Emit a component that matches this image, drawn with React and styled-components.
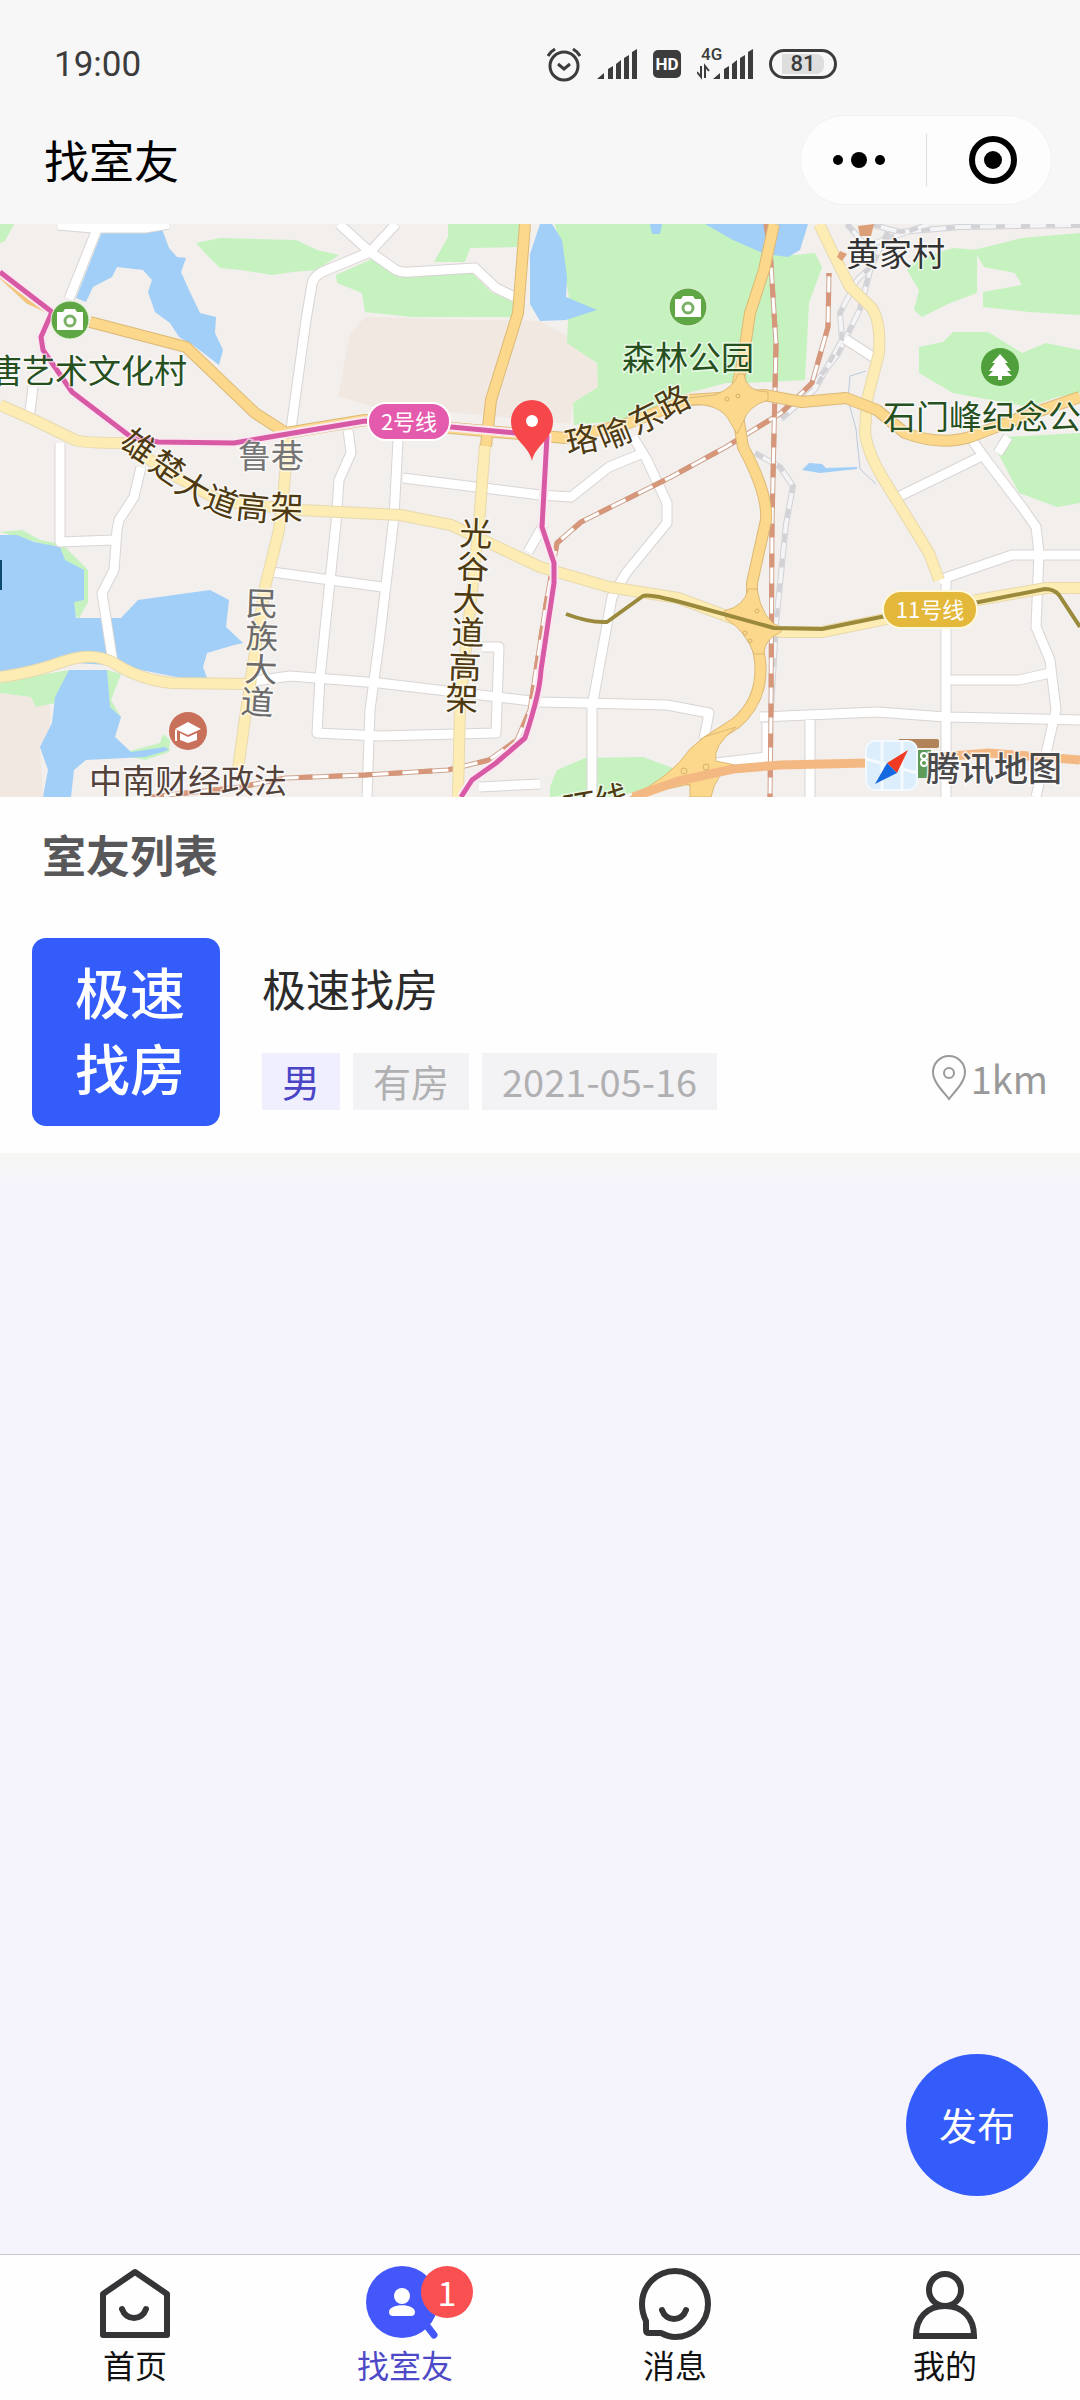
import styled, { createGlobalStyle, css } from 'styled-components'

const GlobalStyle = createGlobalStyle`
  * {
    box-sizing: border-box;
  }

  body {
    margin: 0;
    background: #f5f4fd;
    font-family: 'Noto Sans CJK SC', 'Noto Sans', sans-serif;
  }

  button {
    padding: 0;
    border: none;
    background: none;
    font-family: inherit;
    cursor: pointer;
  }
`

// ---- map data ----

const greens = [
  '0,0 14,0 5,17 0,19',
  '196,19 220,14 296,16 317,26 339,31 317,46 293,48 272,51 241,46 220,44 207,31',
  '336,51 374,34 406,51 472,49 492,69 515,78 513,93 413,93 365,88 362,69 337,59',
  '448,0 520,0 517,23 470,24 465,38 434,38 448,13',
  '555,0 712,0 764,29 795,31 815,29 822,43 809,79 805,156 747,159 726,159 688,169 626,196 574,201 573,179 598,163 597,139 567,119 569,73 561,29',
  '974,26 1022,14 1080,9 1080,91 1029,88 983,83 983,68 1022,61 1015,49 984,43',
  '907,46 915,36 953,24 977,26 977,69 950,79 922,93 914,86 919,66',
  '919,123 943,118 953,108 988,108 1022,129 1046,119 1080,126 1080,169 1057,173 1029,183 953,169 919,149',
  '1005,213 1080,209 1080,279 1057,283 1019,269 998,229',
  '550,563 557,546 585,534 643,533 678,546 664,563 609,573 550,573',
  '0,458 69,446 55,479 36,483 31,473 0,469',
  '0,308 22,306 40,316 62,320 88,346 88,378 78,396 72,380 60,325',
  '107,446 121,450 111,476 121,493 114,495 104,480',
  '118,530 160,519 163,510 170,516 169,528 145,536',
]

const sands = [
  '365,93 480,96 540,97 567,112 597,139 598,163 573,179 570,200 470,190 370,182 338,172 350,110',
  '0,469 31,473 50,482 50,503 40,523 43,573 0,573',
]

const waters = [
  '102,8 162,5 169,24 177,33 186,34 181,48 189,66 200,89 216,93 215,109 223,126 219,141 193,121 179,113 170,99 155,88 148,68 152,56 143,46 117,43 112,53 93,63 86,78 76,74',
  '0,311 17,311 34,318 60,323 65,336 84,346 84,376 74,378 76,394 121,394 138,376 210,366 229,376 226,403 243,419 234,421 207,429 203,443 207,454 186,455 121,442 62,438 0,451',
  '69,446 107,446 110,483 121,493 115,513 131,528 165,523 169,526 145,533 86,536 74,546 71,573 43,573 48,546 40,523 52,499 55,473',
  '705,0 808,0 800,26 788,33 765,30 733,16',
  '540,0 552,0 562,16 567,53 566,73 597,86 566,96 540,97 530,80 530,30',
  '650,0 662,0 660,10 652,10',
  '802,246 809,239 822,240 826,244 857,243 857,245 820,249',
]

const whiteRoads = [
  'M58 1L93 4L145 4L169 0',
  'M97 5L69 75',
  'M339 0L370 28L396 0',
  'M370 28L322 48Q313 53 312 60L306 96L291 205',
  'M370 28L396 46Q402 49 410 48L475 44L496 64L517 74',
  'M33 163L29 195',
  'M60 219L60 318L114 316',
  'M141 243L134 273L119 296L117 306L114 346L102 369L113 439',
  'M348 206L351 229L339 256L336 299L320 453L317 509L380 512L496 509L499 423L482 423',
  'M398 216L394 293L379 419L370 486L367 573',
  'M403 254L540 271L571 273L609 243L643 229',
  'M633 213L647 236L667 279L667 299L626 349L612 373L592 483L592 573',
  'M272 348L382 363',
  'M248 458L290 452L379 459L540 478L667 481L709 489L704 515',
  'M479 563L540 560',
  'M544 300L528 328',
  'M939 356L1012 331L1080 331',
  'M970 213L984 233L1022 283L1036 303L1039 329L1036 403L1050 436L1056 486L1036 573',
  'M898 273L984 231',
  'M998 229L1008 213',
  'M946 350L946 573',
  'M950 456L1019 456L1050 449',
  'M760 493L877 488L946 493L1080 496',
  'M767 499L767 533L716 539',
  'M810 496L810 573',
  'M845 115L873 133',
]

const yellowRoads = [
  'M0 181L34 196L75 216Q83 219 124 219L172 250L220 277L300 286L400 291L451 301L540 343L609 363L678 374L740 397L781 408L822 408L881 396L977 376L1046 364L1080 364',
  'M0 453Q32 449 62 438T114 439Q140 456 172 459L248 460',
  'M289 203L284 263L279 306L265 363L247 480L238 545',
  'M485 220L479 300L460 480L458 573',
  'M819 0L833 29L850 63L871 83Q881 96 879 129L867 176L865 209Q868 230 884 256L905 290L929 329L939 356',
]

const orangeRoads = [
  'M90 98L186 123L255 189L286 209L365 196L451 204L566 214L626 200L688 176L735 173L764 171L802 178L846 174L877 186L905 209Q940 222 970 213L1022 193L1080 173',
  'M525 0L518 89L491 176L486 222',
  'M774 0L764 46L750 89L743 136L735 173L743 223Q768 269 766 296L752 359L752 393L760 436Q764 475 736 499L705 519L685 560',
]

const rails = [
  'M150 573L241 563L286 554L365 551L448 546L489 536L517 516L530 486L546 380L557 319L581 298L671 253L726 223L781 189L812 159L828 103L829 49',
  'M766 0L770 25L776 120L772 300L771 486L770 573',
]

const greyRails = [
  'M871 43L857 56L840 89L842 116L815 165L781 195',
  'M888 8L871 43L860 85L838 130L812 163',
  'M1080 1L960 3L900 8L870 0',
  'M847 0L866 22L930 0',
  'M755 229L780 243L793 262L786 300L776 400L771 486',
]

const line2 = 'M0 48L52 88L41 113L43 126L72 168L131 213L158 218L234 219L365 197L451 203L547 212L542 303L554 339L554 359L541 446Q540 469 525 514L496 539L472 556L461 573'
const line11 = 'M566 390Q590 399 607 398L643 372Q650 369 698 383L774 404L822 405L881 393L979 378L1045 365Q1054 365 1059 371L1080 403'

const labelSize = 33

// every glyph is [character, centre x, centre y, angle]
const streets = [
  { color: '#4e3a12', glyphs: [['雄', 139, 221, 35], ['楚', 168, 243, 34], ['大', 194, 263, 30], ['道', 222, 277, 20], ['高', 253, 283, 6], ['架', 287, 283, 2]] },
  { color: '#4e3a12', glyphs: [['珞', 582, 215, -12], ['喻', 615, 209, -22], ['东', 645, 193, -26], ['路', 673, 177, -28]] },
  { color: '#4e3a12', glyphs: [['光', 476, 309, 2], ['谷', 473, 342, 2], ['大', 469, 375, 2], ['道', 468, 408, 2], ['高', 465, 442, 2], ['架', 462, 474, 2]] },
  { color: '#6b6b6b', glyphs: [['民', 262, 379, 2], ['族', 262, 412, 2], ['大', 261, 445, 2], ['道', 257, 478, 4]] },
  { color: '#4e3a12', glyphs: [['三', 551, 587, -10], ['环', 580, 582, -10], ['线', 611, 575, -10]] },
]

const StreetName = ({ color, glyphs }) => {
  const origins = glyphs.map(([, cx, cy, angle]) => {
    const a = (angle * Math.PI) / 180
    const dx = -labelSize / 2
    const dy = labelSize * 0.38
    return [
      Math.round(cx + dx * Math.cos(a) - dy * Math.sin(a)),
      Math.round(cy + dx * Math.sin(a) + dy * Math.cos(a)),
    ]
  })

  return (
    <MapText
      $color={color}
      x={origins.map((o) => o[0]).join(' ')}
      y={origins.map((o) => o[1]).join(' ')}
      rotate={glyphs.map((g) => g[3]).join(' ')}
    >
      {glyphs.map((g) => g[0]).join('')}
    </MapText>
  )
}

const Roads = ({ paths, width, color, casing }) => (
  <g fill="none" strokeLinejoin="round">
    {paths.map((d) => <path key={d} d={d} stroke={casing} strokeWidth={width + 2} />)}
    {paths.map((d) => <path key={d} d={d} stroke={color} strokeWidth={width} />)}
  </g>
)

const CameraPoi = ({ x, y }) => (
  <g transform={`translate(${x} ${y})`}>
    <circle r="19" fill="#5fa745" stroke="#e6f5dc" strokeWidth="1" />
    <path d="M-13 -8H-7L-5 -11H5L7 -8H13V10H-13Z" fill="#fff" />
    <circle cy="1" r="5" fill="#fff" stroke="#7ab065" strokeWidth="3" />
  </g>
)

const RoomMap = () => (
  <MapSvg viewBox="0 0 1080 573" role="img" aria-label="地图">
    <rect width="1080" height="573" fill="#f2efed" />
    {sands.map((p) => <polygon key={p} points={p} fill="#f0e8e1" />)}
    {greens.map((p) => <polygon key={p} points={p} fill="#c5f2bf" />)}
    {waters.map((p) => <polygon key={p} points={p} fill="#a1cff7" />)}
    <path d="M866 147L850 152L848 175L856 205L860 245L876 260" fill="none" stroke="#bccbdc" strokeWidth="1" />

    <Roads paths={greyRails} width={4} color="#f4f4f6" casing="#d2d2d6" />
    <g fill="none" stroke="#d2d2d6" strokeWidth="4" strokeDasharray="9 16">
      {greyRails.map((d) => <path key={d} d={d} />)}
    </g>
    <Roads paths={whiteRoads} width={9} color="#fff" casing="#d8d5d4" />
    <Roads paths={rails} width={3} color="#fff" casing="#cfa591" />
    <g fill="none" stroke="#d5967a" strokeWidth="5" strokeDasharray="14 16">
      {rails.map((d) => <path key={d} d={d} />)}
    </g>
    <Roads paths={yellowRoads} width={10} color="#fdedb4" casing="#e8d9ae" />
    <Roads paths={orangeRoads} width={10} color="#fcd88c" casing="#dcb976" />

    {/* interchanges */}
    <g fill="#fcd88c" stroke="#dcb976" strokeWidth="1">
      <path d="M738 150Q735 163 715 171L688 174L688 181Q720 178 730 198L737 210L743 198Q748 182 768 176L768 168Q746 168 744 150Z" />
      <path d="M748 365Q745 382 724 387L726 395Q745 406 754 430L764 430Q764 415 781 408L781 404Q762 396 757 365Z" />
      <path d="M704 513L736 503Q712 523 716 537L735 541Q716 548 711 573H690L690 560L630 573Q672 552 690 525Z" />
    </g>
    <path d="M633 573L678 557L733 545L781 541L867 539L988 529L1080 536" fill="none" stroke="#f4b983" strokeWidth="9" />
    <g fill="none" stroke="#d4b26c" strokeWidth="1">
      <circle cx="684" cy="547" r="3" />
      <circle cx="706" cy="543" r="3" />
      <circle cx="757" cy="387" r="2" />
      <circle cx="745" cy="409" r="2" />
      <circle cx="750" cy="417" r="2" />
      <circle cx="727" cy="175" r="2" />
      <circle cx="738" cy="172" r="2" />
    </g>
    <path d="M0 52L28 78L54 90" fill="none" stroke="#f3c47c" strokeWidth="4" />
    <path d="M858 2L874 0L871 12L860 12ZM840 27L847 30L842 37L837 33Z" fill="#dc9f78" />

    <g fill="none" strokeLinejoin="round">
      <path d={line2} stroke="#fbe9f2" strokeWidth="9" />
      <path d={line2} stroke="#d85aa5" strokeWidth="5" />
      <path d={line11} stroke="#9b8a3c" strokeWidth="4" />
    </g>

    <rect x="368" y="179" width="82" height="37" rx="18" fill="#e45bae" stroke="#fff" strokeWidth="2" />
    <LineText x="409" y="206">2号线</LineText>
    <rect x="883" y="367" width="94" height="37" rx="18" fill="#e3b83b" stroke="#fff8dc" strokeWidth="2" />
    <LineText x="930" y="394">11号线</LineText>

    <CameraPoi x={70} y={96} />
    <CameraPoi x={688} y={83} />
    <g transform="translate(1000 143)">
      <circle r="19" fill="#4f9f3a" />
      <path d="M0 -13L8 -4H5L11 4H7L12 9H2V13H-2V9H-12L-7 4H-11L-5 -4H-8Z" fill="#fff" />
    </g>
    <g transform="translate(188 507)">
      <circle r="19" fill="#c9705a" />
      <path d="M-13 -2L0 -9L13 -2L0 4ZM-8 2L0 6L9 2V9L0 12L-8 9Z" fill="#fff" />
      <path d="M-12 -1V10" stroke="#fff" strokeWidth="2" />
    </g>

    {streets.map((s, i) => <StreetName key={i} {...s} />)}
    <MapText $color="#27501f" x="-11" y="159">唐艺术文化村</MapText>
    <MapText $color="#27501f" x="622" y="146">森林公园</MapText>
    <MapText $color="#27501f" x="883" y="205">石门峰纪念公园</MapText>
    <MapText $color="#333" x="846" y="42">黄家村</MapText>
    <MapText $color="#757575" x="238" y="244">鲁巷</MapText>
    <MapText $color="#54423a" x="89" y="569">中南财经政法</MapText>

    <path d="M532 237C529 221 511 216 511 197A21 21 0 0 1 553 197C553 216 535 221 532 237Z" fill="#f6474b" />
    <circle cx="532" cy="197" r="6" fill="#fff" />

    <rect x="0" y="336" width="2" height="30" fill="#0d4a70" />

    {/* map provider mark */}
    <rect x="898" y="515" width="41" height="9" rx="2" fill="#b08358" />
    <rect x="917" y="526" width="14" height="28" fill="#5e9a58" />
    <g fill="none" stroke="#fff" strokeWidth="2">
      <circle cx="924" cy="532" r="3" />
      <circle cx="924" cy="539" r="3" />
    </g>
    <rect x="866" y="517" width="51" height="49" rx="9" fill="#dceefb" stroke="#f2f9ff" strokeWidth="2" />
    <path d="M882 517V566M902 517V566M866 535L917 549" stroke="#f4faff" strokeWidth="3" />
    <path d="M908 526L887 539L897 549Z" fill="#f03a22" />
    <path d="M875 560L887 539L897 549Z" fill="#1769e0" />
    <ProviderText x="926" y="557">腾讯地图</ProviderText>
  </MapSvg>
)

// ---- icons ----

const SignalBars = ({ x = 0 }) => (
  <path
    transform={`translate(${x} 0)`}
    d="M0 30L7 24V30ZM11 20L16 17V30H11ZM19 15L24 11V30H19ZM27 9L32 6V30H27ZM35 3L40 0V30H35Z"
    fill="#3c3c3c"
  />
)

const tabs = [
  {
    label: '首页',
    icon: (
      <g fill="none" stroke="#353538" strokeWidth="6" strokeLinejoin="round" strokeLinecap="round">
        <path d="M40 8L72 30V71H8V30Z" />
        <path d="M27 45C31 57 47 57 51 45" />
      </g>
    ),
  },
  {
    label: '找室友',
    active: true,
    count: 1,
    icon: (
      <g>
        <path d="M62 62L69 71" stroke="#4457fb" strokeWidth="7" strokeLinecap="round" />
        <circle cx="37" cy="38" r="36" fill="#4457fb" />
        <circle cx="37" cy="32" r="8" fill="#fff" />
        <path d="M24 48C24 39 50 39 50 48C50 51 48 52 46 52H28C26 52 24 51 24 48Z" fill="#fff" />
      </g>
    ),
  },
  {
    label: '消息',
    icon: (
      <g fill="none" stroke="#353538" strokeWidth="6" strokeLinejoin="round" strokeLinecap="round">
        <path d="M26 69H14Q11 69 11 66V57Q7 49 7 40A33 33 0 1 1 40 73Q34 73 26 69Z" />
        <path d="M27 46C31 58 47 58 51 46" />
      </g>
    ),
  },
  {
    label: '我的',
    icon: (
      <g fill="none" stroke="#353538" strokeWidth="6">
        <circle cx="40" cy="26" r="16" />
        <path d="M11 72C11 54 22 42 40 42C58 42 69 54 69 72Z" />
      </g>
    ),
  },
]

const rooms = [
  { id: 1, name: '极速找房', logo: ['极速', '找房'], gender: '男', house: '有房', date: '2021-05-16', distance: '1km' },
]

const App = () => {
  return (
    <Page>
      <GlobalStyle />
      <Header>
        <StatusBar>
          <Time>19:00</Time>
          <StatusIcons>
            <svg width="34" height="36" viewBox="1 0 34 36" fill="none" stroke="#3c3c3c" strokeWidth="3">
              <circle cx="18" cy="20" r="14" />
              <path d="M12 18L18 23L24 18" />
              <path d="M2 10Q4 6 9 3M34 10Q32 6 27 3" />
            </svg>
            <svg width="40" height="30" viewBox="0 0 40 30"><SignalBars /></svg>
            <Hd>HD</Hd>
            <svg width="56" height="40" viewBox="0 0 56 40">
              <g transform="translate(0 5)"><SignalBars x={16} /></g>
              <path d="M0 28L4 33V22M8 34V22L12 27" fill="none" stroke="#3c3c3c" strokeWidth="2" />
              <NetText x="4" y="16">4G</NetText>
            </svg>
            <Battery><Charge>81</Charge></Battery>
          </StatusIcons>
        </StatusBar>
        <TitleBar>
          <Title>找室友</Title>
          <Capsule>
            <CapsuleButton type="button" aria-label="更多">
              <svg width="52" height="52" viewBox="0 0 52 52">
                <circle cx="5" cy="26" r="5" />
                <circle cx="26" cy="26" r="8" />
                <circle cx="47" cy="26" r="5" />
              </svg>
            </CapsuleButton>
            <Divider />
            <CapsuleButton type="button" aria-label="关闭">
              <svg width="52" height="52" viewBox="0 0 52 52">
                <circle cx="26" cy="26" r="21" fill="none" stroke="#000" strokeWidth="6" />
                <circle cx="26" cy="26" r="9" />
              </svg>
            </CapsuleButton>
          </Capsule>
        </TitleBar>
      </Header>

      <RoomMap />

      <ListPanel>
        <ListTitle>室友列表</ListTitle>
        {rooms.map((room) => (
          <RoomCard key={room.id}>
            <Avatar>
              {room.logo.map((line) => <span key={line}>{line}</span>)}
            </Avatar>
            <RoomInfo>
              <RoomName>{room.name}</RoomName>
              <RoomMeta>
                <Tags>
                  <Tag $primary>{room.gender}</Tag>
                  <Tag>{room.house}</Tag>
                  <Tag>{room.date}</Tag>
                </Tags>
                <Distance>
                  <svg width="36" height="46" viewBox="0 0 36 46" fill="none" stroke="#999" strokeWidth="2">
                    <path d="M18 44C14 38 2 28 2 17A16 16 0 0 1 34 17C34 28 22 38 18 44Z" />
                    <circle cx="18" cy="18" r="5" />
                  </svg>
                  {room.distance}
                </Distance>
              </RoomMeta>
            </RoomInfo>
          </RoomCard>
        ))}
      </ListPanel>
      <Blank />

      <PublishButton type="button">发布</PublishButton>

      <TabBar>
        {tabs.map((tab) => (
          <Tab key={tab.label} href="#" $active={tab.active}>
            <TabIcon>
              <svg width="80" height="80" viewBox="0 0 80 80">{tab.icon}</svg>
              {tab.count && <Badge>{tab.count}</Badge>}
            </TabIcon>
            {tab.label}
          </Tab>
        ))}
      </TabBar>
    </Page>
  )
}

const Page = styled.div`
  display: flex;
  flex-direction: column;
  min-height: 100vh;
`

const Header = styled.header`
  background: #f7f7f7;
`

const StatusBar = styled.div`
  display: flex;
  align-items: center;
  height: 96px;
  padding: 32px 243px 0 54px;
`

const Time = styled.span`
  flex: 1;
  color: #3c3c3c;
  font-family: Roboto, sans-serif;
  font-size: 35px;
`

const StatusIcons = styled.div`
  display: flex;
  align-items: center;
  gap: 16px;
`

const Hd = styled.span`
  width: 28px;
  border-radius: 5px;
  background: #3c3c3c;
  color: #fff;
  font-family: Roboto, sans-serif;
  font-size: 17px;
  font-weight: 700;
  line-height: 28px;
  text-align: center;
`

const NetText = styled.text`
  fill: #3c3c3c;
  font-family: Roboto, sans-serif;
  font-size: 17px;
  font-weight: 500;
`

const Battery = styled.span`
  display: flex;
  justify-content: center;
  align-items: center;
  width: 68px;
  height: 30px;
  border: 3px solid #3c3c3c;
  border-radius: 15px;
`

const Charge = styled.span`
  padding: 0 8px;
  border-radius: 0 8px 8px 0;
  background: #dedede;
  color: #3c3c3c;
  font-family: Roboto, sans-serif;
  font-size: 22px;
  font-weight: 500;
  line-height: 20px;
`

const TitleBar = styled.div`
  display: flex;
  align-items: center;
  justify-content: space-between;
  height: 128px;
  padding: 0 28px 0 44px;
`

const Title = styled.h1`
  margin: 0;
  color: #000;
  font-size: 45px;
  font-weight: 400;
  line-height: 64px;
`

const Capsule = styled.div`
  display: flex;
  align-items: center;
  width: 252px;
  height: 90px;
  border: 1px solid #f2f2f2;
  border-radius: 45px;
  background: #fdfdfd;
`

const CapsuleButton = styled.button`
  display: flex;
  flex: 1;
  justify-content: center;
  align-items: center;
  height: 100%;

  &:first-child {
    padding-right: 8px;
  }

  &:last-child {
    padding-left: 8px;
  }
`

const Divider = styled.span`
  width: 1px;
  height: 52px;
  background: #dcdcdc;
`

const MapSvg = styled.svg`
  display: block;
  width: 100%;
`

const MapText = styled.text`
  fill: ${({ $color }) => $color};
  font-size: ${labelSize}px;
  paint-order: stroke;
  stroke: rgba(255, 255, 255, 0.6);
  stroke-width: 3px;
`

const LineText = styled.text`
  fill: #fff;
  font-size: 22px;
  text-anchor: middle;
`

const ProviderText = styled.text`
  fill: #4a4a4c;
  font-size: 34px;
  font-weight: 500;
  paint-order: stroke;
  stroke: rgba(255, 255, 255, 0.8);
  stroke-width: 3px;
`

const ListPanel = styled.main`
  padding: 25px 32px 27px;
  background: #fefefe;
`

const ListTitle = styled.h2`
  margin: 0 0 52px 10px;
  color: #58585a;
  font-size: 44px;
  font-weight: 700;
  line-height: 64px;
`

const RoomCard = styled.article`
  display: flex;
  gap: 42px;
`

const Avatar = styled.div`
  display: flex;
  flex-direction: column;
  justify-content: center;
  align-items: center;
  width: 188px;
  height: 188px;
  padding: 0 0 8px 8px;
  border-radius: 14px;
  background: #335cfb;
  color: #fff;
  font-size: 55px;
  font-weight: 500;
  line-height: 76px;
`

const RoomInfo = styled.div`
  display: flex;
  flex: 1;
  flex-direction: column;
  justify-content: space-between;
  padding: 18px 0 16px;
`

const RoomName = styled.h3`
  margin: 0;
  color: #2b2b2b;
  font-size: 44px;
  font-weight: 400;
  line-height: 64px;
`

const RoomMeta = styled.div`
  display: flex;
  justify-content: space-between;
  align-items: center;
`

const Tags = styled.div`
  display: flex;
  gap: 13px;
`

const Tag = styled.span`
  padding: 0 20px 2px;
  background: #f3f3f5;
  color: #b0b0b2;
  font-size: 38px;
  line-height: 55px;

  ${({ $primary }) => $primary && css`
    background: #f0effd;
    color: #4a44c6;
  `}
`

const Distance = styled.span`
  display: flex;
  align-items: center;
  gap: 4px;
  padding-bottom: 8px;
  color: #999;
  font-size: 38px;
  line-height: 48px;
`

const Blank = styled.div`
  flex: 1;
  background: linear-gradient(#f7f7f3, #f5f4fd 36px);
`

const PublishButton = styled.button`
  position: fixed;
  right: 32px;
  bottom: 204px;
  width: 142px;
  height: 142px;
  padding-bottom: 4px;
  border-radius: 50%;
  background: #335cfb;
  color: #fff;
  font-size: 38px;
`

const TabBar = styled.nav`
  display: flex;
  border-top: 1px solid #c8c7d0;
  background: #fefefe;
`

const Tab = styled.a`
  display: flex;
  flex: 1;
  flex-direction: column;
  align-items: center;
  padding: 9px 0 16px;
  color: ${({ $active }) => ($active ? '#4e49c6' : '#111')};
  font-size: 32px;
  line-height: 40px;
  text-decoration: none;
`

const TabIcon = styled.span`
  position: relative;
  height: 80px;
`

const Badge = styled.span`
  position: absolute;
  top: 2px;
  left: 56px;
  width: 52px;
  border-radius: 26px;
  background: #fb5052;
  color: #fff;
  font-size: 34px;
  line-height: 52px;
  text-align: center;
`

export default App
